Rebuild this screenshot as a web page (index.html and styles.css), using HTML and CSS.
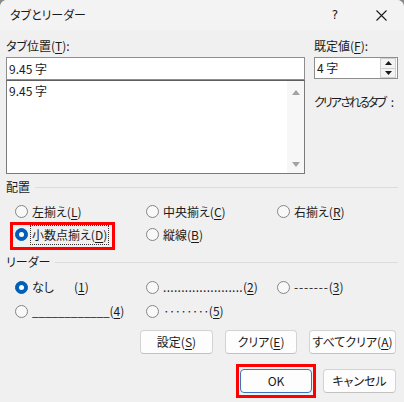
FILE: index.html
```html
<!DOCTYPE html>
<html lang="ja">
<head>
<meta charset="utf-8">
<title>タブとリーダー</title>
<link rel="stylesheet" href="styles.css">
</head>
<body>
<div class="win">
  <div class="titlebar">
    <span class="title">タブとリーダー</span>
    <span class="tbtn help">?</span>
    <span class="tbtn close"><svg width="11" height="11" viewBox="0 0 11 11"><path d="M0.5 0.5L10.5 10.5M10.5 0.5L0.5 10.5" stroke="#1a1a1a" stroke-width="1.1" fill="none"/></svg></span>
  </div>
  <div class="body">
    <div class="top">
      <div class="col">
        <div class="label">タブ位置(<u>T</u>):</div>
        <div class="input">9.45 字</div>
        <div class="list">
          <div class="items"><div class="item">9.45 字</div></div>
          <div class="scroll">
            <svg width="8" height="5" viewBox="0 0 8 5"><path d="M4 0L8 5H0Z" fill="#a3a3a3"/></svg>
            <svg width="8" height="5" viewBox="0 0 8 5"><path d="M0 0H8L4 5Z" fill="#a3a3a3"/></svg>
          </div>
        </div>
      </div>
      <div class="col">
        <div class="label">既定値(<u>F</u>):</div>
        <div class="spin">
          <span class="spinval">4 字</span>
          <div class="spinbtns">
            <span class="sb"><svg width="7" height="4" viewBox="0 0 7 4"><path d="M3.5 0L7 4H0Z" fill="#1a1a1a"/></svg></span>
            <span class="sb"><svg width="7" height="4" viewBox="0 0 7 4"><path d="M0 0H7L3.5 4Z" fill="#1a1a1a"/></svg></span>
          </div>
        </div>
        <div class="note">クリアされるタブ<span class="colon"> :</span></div>
      </div>
    </div>

    <div class="ghead"><span>配置</span><span class="rule"></span></div>
    <div class="rows">
      <div class="row">
        <div class="opt"><span class="radio"></span><span>左揃え(<u>L</u>)</span></div>
        <div class="opt"><span class="radio"></span><span>中央揃え(<u>C</u>)</span></div>
        <div class="opt"><span class="radio"></span><span>右揃え(<u>R</u>)</span></div>
      </div>
      <div class="row">
        <div class="opt marked"><span class="radio on"></span><span class="focus">小数点揃え(<u>D</u>)</span><span class="mark"></span></div>
        <div class="opt"><span class="radio"></span><span>縦線(<u>B</u>)</span></div>
      </div>
    </div>

    <div class="ghead lead"><span>リーダー</span><span class="rule"></span></div>
    <div class="rows lrows">
      <div class="row">
        <div class="opt"><span class="radio on"></span><span>なし<span class="n1">(<u>1</u>)</span></span></div>
        <div class="opt"><span class="radio"></span><span><span class="dots">......................</span>(<u>2</u>)</span></div>
        <div class="opt"><span class="radio"></span><span><span class="dash">-------</span>(<u>3</u>)</span></div>
      </div>
      <div class="row">
        <div class="opt"><span class="radio"></span><span><span class="under">____________</span>(<u>4</u>)</span></div>
        <div class="opt"><span class="radio"></span><span><span class="mdots">········</span>(<u>5</u>)</span></div>
      </div>
    </div>

    <div class="btnrow">
      <span class="btn w73">設定(<u>S</u>)</span>
      <span class="btn w72">クリア(<u>E</u>)</span>
      <span class="btn w87">すべてクリア(<u>A</u>)</span>
    </div>
    <div class="btnrow okrow">
      <span class="btn w72 def">OK<span class="mark"></span></span>
      <span class="btn w73">キャンセル</span>
    </div>
  </div>
</div>
</body>
</html>
```
FILE: styles.css
```css
* { box-sizing: border-box; margin: 0; padding: 0; }
html { background: #8a8a8a; }
body {
  margin: 0;
  width: 404px;
  height: 402px;
  overflow: hidden;
  font-family: "Noto Sans CJK JP", "Noto Sans", sans-serif;
  font-size: 12px;
  color: #1a1a1a;
  font-feature-settings: "palt";
  white-space: nowrap;
}
u { text-decoration: underline; text-underline-offset: 2px; }
.win {
  width: 404px;
  height: 402px;
  background: #f0f0f0;
  border-radius: 7px 7px 0 0;
  overflow: hidden;
}
.titlebar {
  height: 30px;
  display: flex;
  align-items: center;
  background: #f3f3f3;
}
.title { flex: 1; padding-left: 10px; line-height: 16px; }
.tbtn {
  width: 46px;
  height: 30px;
  display: flex;
  align-items: center;
  justify-content: center;
  font-size: 13px;
}
.help { font-family: "DejaVu Sans", sans-serif; font-size: 12px; }
.body { padding: 8px 6px 0 6px; }
.top {
  display: grid;
  grid-template-columns: 299px 84px;
  column-gap: 9px;
}
.label { line-height: 16px; height: 16px; margin-bottom: 3px; }
.input {
  height: 23px;
  border: 1px solid #8e8e8e;
  background: #fff;
  line-height: 21px;
  padding-left: 2px;
}
.list {
  height: 94px;
  border: 1px solid #7a7a7a;
  border-top-color: #5e5e5e;
  background: #fff;
  display: flex;
}
.items { flex: 1; padding: 2px 2px; }
.item { line-height: 16px; }
.scroll {
  width: 17px;
  background: #f7f7f7;
  display: flex;
  flex-direction: column;
  justify-content: space-between;
  align-items: center;
  padding: 9px 0 6px 0;
}
.spin {
  height: 22px;
  border: 1px solid #8e8e8e;
  background: #fff;
  display: flex;
}
.spinval { flex: 1; line-height: 20px; padding-left: 2px; }
.spinbtns { width: 17px; display: flex; flex-direction: column; }
.sb {
  flex: 1;
  display: flex;
  align-items: center;
  justify-content: center;
  border: 1px solid #cfcfcf;
  background: #f3f3f3;
  margin: 0 1px 0 0;
}
.sb + .sb { border-top: none; }
.note { line-height: 16px; margin-top: 15px; letter-spacing: -1.9px; }
.colon { letter-spacing: 0; padding-left: 3px; }

.ghead {
  display: flex;
  align-items: center;
  height: 16px;
  line-height: 16px;
  margin-top: 5px;
}
.ghead.lead { margin-top: 8px; }
.rule { flex: 1; height: 1px; background: #dcdcdc; margin-left: 5px; }
.rows { padding: 5px 0 0 9px; }
.row {
  display: grid;
  grid-template-columns: 131px 131px auto;
  height: 23px;
  align-items: center;
}
.lrows .row { height: 24px; }
.opt {
  display: flex;
  align-items: center;
  gap: 4px;
  line-height: 16px;
  justify-self: start;
  position: relative;
}
.radio {
  width: 13px;
  height: 13px;
  border-radius: 50%;
  border: 1px solid #858585;
  background: #f8f8f8;
  flex: none;
  position: relative;
}
.radio.on { background: #005fb8; border-color: #005fb8; }
.radio.on::after {
  content: "";
  position: absolute;
  left: 3px;
  top: 3px;
  width: 5px;
  height: 5px;
  border-radius: 50%;
  background: #fff;
}
.focus { outline: 1px dotted #333; outline-offset: 1px; }
.marked .mark {
  position: absolute;
  left: -5px;
  top: -5px;
  width: 105px;
  height: 28px;
  border: 3px solid #ff0000;
}
.n1 { margin-left: 20px; }
.dots { letter-spacing: 0.3px; }
.dash { letter-spacing: 0.8px; }
.under { letter-spacing: -0.25px; }
.mdots { letter-spacing: -1px; }

.btnrow {
  display: flex;
  justify-content: flex-end;
  gap: 12px;
  margin-top: 7px;
  padding-right: 2px;
}
.okrow { margin-top: 15px; gap: 11px; }
.btn {
  height: 24px;
  border: 1px solid #d3d3d3;
  border-bottom-color: #c2c2c2;
  border-radius: 4px;
  background: #fdfdfd;
  line-height: 22px;
  text-align: center;
  position: relative;
}
.w72 { width: 72px; }
.w73 { width: 73px; }
.w87 { width: 87px; }
.def { border-color: #3a74c0; }
.def .mark {
  position: absolute;
  left: -5px;
  right: -5px;
  top: -6px;
  bottom: -6px;
  border: 3px solid #ff0000;
}
```
